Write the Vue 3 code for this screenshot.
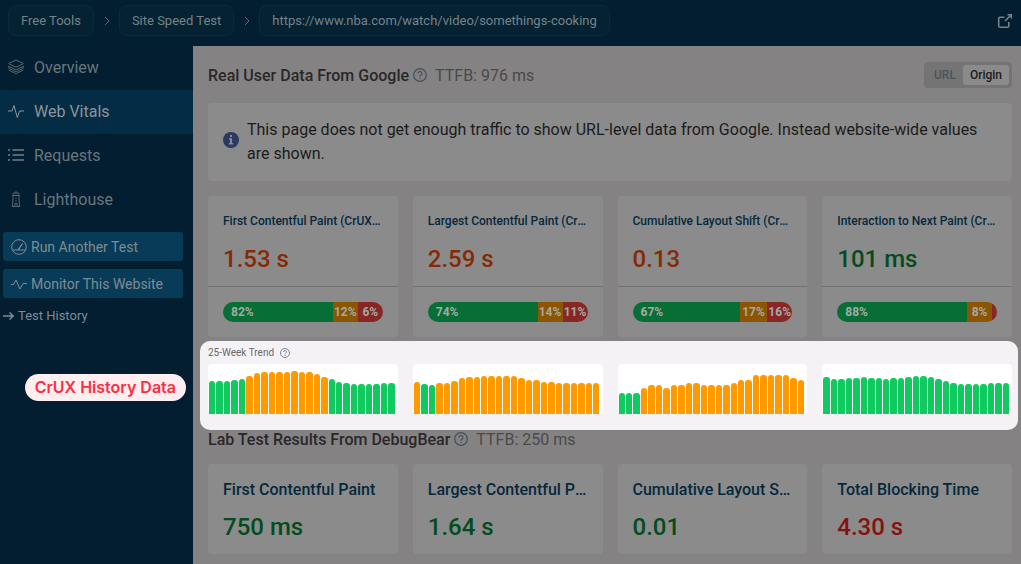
<script setup>
const crumbs = ['Free Tools', 'Site Speed Test', 'https://www.nba.com/watch/video/somethings-cooking']

const cruxCards = [
  { title: 'First Contentful Paint (CrUX Data)', value: '1.53 s', tone: 'warn', shares: [['82%', 110], ['12%', 25], ['6%', 25]] },
  { title: 'Largest Contentful Paint (CrUX Data)', value: '2.59 s', tone: 'warn', shares: [['74%', 110], ['14%', 25], ['11%', 25]] },
  { title: 'Cumulative Layout Shift (CrUX Data)', value: '0.13', tone: 'warn', shares: [['67%', 107], ['17%', 27], ['16%', 25]] },
  { title: 'Interaction to Next Paint (CrUX Data)', value: '101 ms', tone: 'good', shares: [['88%', 130], ['8%', 25], ['', 5]] },
]
const shareClass = ['share-good', 'share-mid', 'share-poor']

const labCards = [
  { title: 'First Contentful Paint', value: '750 ms', tone: 'good' },
  { title: 'Largest Contentful Paint', value: '1.64 s', tone: 'good' },
  { title: 'Cumulative Layout Shift', value: '0.01', tone: 'good' },
  { title: 'Total Blocking Time', value: '4.30 s', tone: 'bad' },
]

// Weekly bar heights in pixels; `mid` is the [from, to) index ranges rated "needs improvement".
const trends = [
  { bars: [33, 33, 33, 34, 35, 38, 41, 42, 42, 42, 42, 43, 42, 42, 40, 37, 35, 32, 31, 30, 30, 30, 30, 31, 31], mid: [[5, 16]] },
  { bars: [32, 30, 29, 31, 31, 33, 36, 37, 37, 38, 38, 38, 38, 38, 36, 34, 34, 32, 32, 31, 31, 31, 31, 31, 31], mid: [[0, 1], [3, 25]] },
  { bars: [21, 21, 21, 26, 29, 29, 26, 29, 29, 31, 31, 29, 29, 29, 29, 31, 34, 34, 39, 39, 39, 39, 39, 36, 34], mid: [[3, 25]] },
  { bars: [37, 35, 35, 36, 36, 37, 36, 36, 35, 36, 36, 37, 38, 38, 37, 35, 33, 31, 30, 30, 30, 30, 31, 31, 31], mid: [] },
]
const isMid = (trend, i) => trend.mid.some(([a, b]) => i >= a && i < b)
</script>

<template>
  <div class="app">
    <header class="topbar">
      <nav class="crumbs" aria-label="Breadcrumb">
        <template v-for="(c, i) in crumbs" :key="c">
          <svg v-if="i" class="chevron" viewBox="0 0 6 10" aria-hidden="true"><path d="M1 1l4 4-4 4" /></svg>
          <a href="#" class="crumb">{{ c }}</a>
        </template>
      </nav>
      <a href="#" class="external" aria-label="Open in new tab">
        <svg viewBox="0 0 16 16"><path d="M7.500 4.200H3a1.300 1.300 0 0 0-1.300 1.300v7.500a1.300 1.300 0 0 0 1.300 1.300h7.500a1.300 1.300 0 0 0 1.300-1.300V9M8 8l6-6M10.500 1.700h3.800V5.500" /></svg>
      </a>
    </header>

    <div class="body">
      <aside class="sidebar">
        <nav class="menu">
          <a href="#" class="item">
            <svg viewBox="0 0 16 16"><path d="M8 1l7.300 3.600L8 8.200.7 4.600zM.7 7.200L8 10.800l7.300-3.600M.7 9.200L8 12.800l7.300-3.600M.7 11L8 14.600 15.300 11M.7 7.200v2M15.300 7.200v2" /></svg>
            Overview
          </a>
          <a href="#" class="item active">
            <svg viewBox="0 0 16 16"><path d="M0 8h4l2-5.500 3.300 12L11.600 8H16" /></svg>
            Web Vitals
          </a>
          <a href="#" class="item">
            <svg viewBox="0 0 16 16"><path class="bold" d="M4.500 3H16M4.500 8H16M4.500 13H16M0 3h2M0 8h2M0 13h2" /></svg>
            Requests
          </a>
          <a href="#" class="item">
            <svg viewBox="0 0 16 16"><path d="M5 4.500V2.500L8 .8l3 1.700v2M4.200 4.500h7.600M5.200 4.500L4.500 15.500h7L10.800 4.500M4 15.500h8M7 15.500V12.500h2v3M8 6.300v1.400M8 9v1.400M7 2.800h2" /></svg>
            Lighthouse
          </a>
        </nav>
        <button type="button" class="action">
          <svg viewBox="0 0 16 16"><circle cx="8" cy="8" r="7.300" /><path d="M1.500 11h13M6.800 10.800L11.500 4.500M7.600 10.800l3.900-6.300" /></svg>
          Run Another Test
        </button>
        <button type="button" class="action">
          <svg viewBox="0 0 16 16"><path d="M0 8.500h2.500L5 4l4 9 3-5.500h4" /></svg>
          Monitor This Website
        </button>
        <a href="#" class="history">
          <svg viewBox="0 0 12 10"><path d="M0 5h10M6.500 1.500L10.200 5 6.500 8.500" /></svg>
          Test History
        </a>
        <div class="callout">CrUX History Data</div>
      </aside>

      <main class="main">
        <div class="heading">
          <h2>Real User Data From Google</h2>
          <svg class="help" viewBox="0 0 14 14"><circle cx="7" cy="7" r="6.300" /><path d="M5 5.600a2 2 0 1 1 2.900 1.700Q7 7.800 7 8.700M7 9.700v1.300" /></svg>
          <span class="ttfb">TTFB: 976 ms</span>
          <div class="toggle">
            <button type="button">URL</button>
            <button type="button" class="on" aria-pressed="true">Origin</button>
          </div>
        </div>

        <div class="notice">
          <svg viewBox="0 0 16 16"><circle cx="8" cy="8" r="8" /><path d="M7 3h2v2H7zM6 6.300h3V11h1.200v1.500H5.800V11H7V7.800H6z" /></svg>
          <p>This page does not get enough traffic to show URL-level data from Google. Instead website-wide values are shown.</p>
        </div>

        <section class="grid">
          <article v-for="c in cruxCards" :key="c.title" class="card">
            <div class="metric">
              <h3 class="small">{{ c.title }}</h3>
              <div class="value" :class="c.tone">{{ c.value }}</div>
            </div>
            <div class="split">
              <div class="shares">
                <span v-for="(s, i) in c.shares" :key="i" :class="shareClass[i]" :style="{ flexGrow: s[1] }">{{ s[0] }}</span>
              </div>
            </div>
          </article>
        </section>

        <section class="trend">
          <div class="trend-title">
            25-Week Trend
            <svg class="help tiny" viewBox="0 0 14 14"><circle cx="7" cy="7" r="6.300" /><path d="M5 5.600a2 2 0 1 1 2.900 1.700Q7 7.800 7 8.700M7 9.700v1.300" /></svg>
          </div>
          <div class="grid">
            <div v-for="(t, n) in trends" :key="n" class="chart">
              <i v-for="(h, i) in t.bars" :key="i" :class="{ mid: isMid(t, i) }" :style="{ height: h + 'px' }"></i>
            </div>
          </div>
        </section>

        <div class="heading lab">
          <h2>Lab Test Results From DebugBear</h2>
          <svg class="help" viewBox="0 0 14 14"><circle cx="7" cy="7" r="6.300" /><path d="M5 5.600a2 2 0 1 1 2.900 1.700Q7 7.800 7 8.700M7 9.700v1.300" /></svg>
          <span class="ttfb">TTFB: 250 ms</span>
        </div>

        <section class="grid">
          <article v-for="c in labCards" :key="c.title" class="card metric">
            <h3>{{ c.title }}</h3>
            <div class="value" :class="c.tone">{{ c.value }}</div>
          </article>
        </section>
      </main>
    </div>
  </div>
</template>

<style>
body {
  margin: 0;
  background: #031e30;
}
</style>

<style scoped>
.app {
  display: flex;
  flex-direction: column;
  min-height: 100vh;
  font-family: Roboto, "Liberation Sans", sans-serif;
  font-size: 16px;
  color: #1c1c1c;
}
*,
*::before {
  box-sizing: border-box;
}
a {
  text-decoration: none;
  color: inherit;
}
button {
  font: inherit;
  border: 0;
  margin: 0;
}
h2,
h3,
p {
  margin: 0;
}
svg {
  flex: none;
  fill: none;
  stroke: currentColor;
}
.topbar {
  display: flex;
  justify-content: space-between;
  padding: 5px 8px 10px;
  color: #75828a;
}
.crumbs {
  display: flex;
  align-items: center;
}
.crumb {
  padding: 0 12px;
  line-height: 29px;
  font-size: 13px;
  border: 1px solid #0b2b3d;
  border-radius: 8px;
  background: #052232;
}
.chevron {
  width: 6px;
  height: 10px;
  margin: 0 9px 0 10px;
  stroke: #5a6a74;
}
.external {
  display: flex;
  align-items: center;
}
.external svg {
  width: 16px;
  height: 16px;
  stroke-width: 1.6;
}
.body {
  display: flex;
  flex: 1;
}
.sidebar {
  position: relative;
  flex: none;
  width: 193px;
  color: #68767e;
}
.item {
  display: flex;
  align-items: center;
  gap: 10px;
  height: 44px;
  padding: 0 8px 2px;
}
.item svg {
  width: 16px;
  height: 16px;
}
.item .bold {
  stroke-width: 2;
}
.item:not(.active) svg {
  color: #56656e;
}
.active {
  color: #8d9499;
  background: #042c45;
}
.menu {
  margin-bottom: 10px;
}
.action {
  display: flex;
  align-items: center;
  gap: 4px;
  width: 180px;
  height: 29px;
  margin: 0 3px 8px;
  padding: 0 8px;
  font-size: 14px;
  color: #808b91;
  background: #073b58;
  border-radius: 3px;
}
.action svg {
  width: 16px;
  height: 16px;
}
.history {
  display: flex;
  align-items: center;
  gap: 3px;
  padding-left: 3px;
  font-size: 13px;
  line-height: 20px;
  color: #808b91;
}
.history svg {
  width: 12px;
  height: 10px;
  stroke-width: 1.5;
}
.callout {
  position: absolute;
  top: 328px;
  right: 7px;
  padding: 0 10px;
  font: 600 16px/27px Inter, "Liberation Sans", sans-serif;
  white-space: nowrap;
  color: #fb2d42;
  background: #feeef0;
  border-radius: 14px;
}
.main {
  flex: 1;
  min-width: 0;
  padding: 16px 9px 10px 15px;
  background: #858284;
}
.heading {
  display: flex;
  align-items: center;
  height: 26px;
  margin-bottom: 15px;
}
h2 {
  font-size: 16px;
  font-weight: 500;
  color: #292829;
}
.help {
  width: 14px;
  height: 14px;
  margin: 0 8px 0 4px;
  color: #44505a;
  stroke-width: 1.2;
}
.ttfb {
  color: #4a494a;
}
.toggle {
  display: flex;
  margin-left: auto;
  padding: 3px;
  background: #747474;
  border-radius: 4px;
}
.toggle button {
  height: 20px;
  padding: 0 7px;
  font-size: 12px;
  font-weight: 500;
  color: #4c545b;
  background: transparent;
  border-radius: 3px;
}
.toggle .on {
  color: #1c1c1c;
  background: #8b8b8b;
}
.notice {
  display: flex;
  align-items: center;
  gap: 8px;
  margin-bottom: 15px;
  padding: 15px;
  line-height: 24px;
  background: #8b8b8b;
  border-radius: 4px;
}
.notice svg {
  width: 16px;
  height: 16px;
  margin-bottom: 4px;
  stroke: none;
  fill: #2a3a62;
}
.notice path {
  fill: #8b8b8b;
}
.grid {
  display: grid;
  grid-template-columns: repeat(4, minmax(0, 1fr));
  gap: 15px;
}
.card {
  background: #8b8b8b;
  border-radius: 4px;
}
.metric {
  padding: 15px 15px 12px;
}
h3 {
  margin-bottom: 11px;
  font-size: 16px;
  font-weight: 500;
  line-height: 22px;
  color: #06283c;
  overflow: hidden;
  white-space: nowrap;
  text-overflow: ellipsis;
}
.small {
  margin-bottom: 13px;
  font-size: 12px;
  line-height: 20px;
}
.value {
  font-size: 24px;
  font-weight: 500;
  line-height: 30px;
}
.warn {
  color: #862a05;
}
.good {
  color: #034c20;
}
.bad {
  color: #86110f;
}
.split {
  padding: 15px;
  border-top: 1px solid #717375;
}
.shares {
  display: flex;
  height: 20px;
  overflow: hidden;
  border-radius: 10px;
  font-size: 12px;
  font-weight: 700;
  line-height: 20px;
  color: #a5a9a5;
}
.shares span {
  flex-basis: 0;
  min-width: 0;
  text-align: center;
}
.shares .share-good {
  text-align: left;
  text-indent: 8px;
  background: #076f35;
}
.share-mid {
  background: #8c5502;
}
.share-poor {
  background: #882725;
}
.trend {
  margin: 4px -6px 0 -8px;
  padding: 3px 6px 16px 8px;
  background: #f4f2f5;
  border-radius: 10px;
}
.trend-title {
  display: flex;
  align-items: center;
  margin-bottom: 2px;
  font-size: 10px;
  line-height: 18px;
  color: #69676a;
}
.tiny {
  width: 10px;
  height: 10px;
  margin: 0 6px;
  color: #64748b;
}
.chart {
  display: flex;
  align-items: flex-end;
  gap: 1px;
  height: 50px;
  padding: 0 3px 0 1px;
  background: #fff;
  border-radius: 4px;
}
.chart i {
  flex: 1;
  background: #10c95f;
  border-radius: 3px 3px 0 0;
}
.chart .mid {
  background: #ff9900;
}
.lab {
  height: 18px;
  margin-bottom: 16px;
}
</style>
